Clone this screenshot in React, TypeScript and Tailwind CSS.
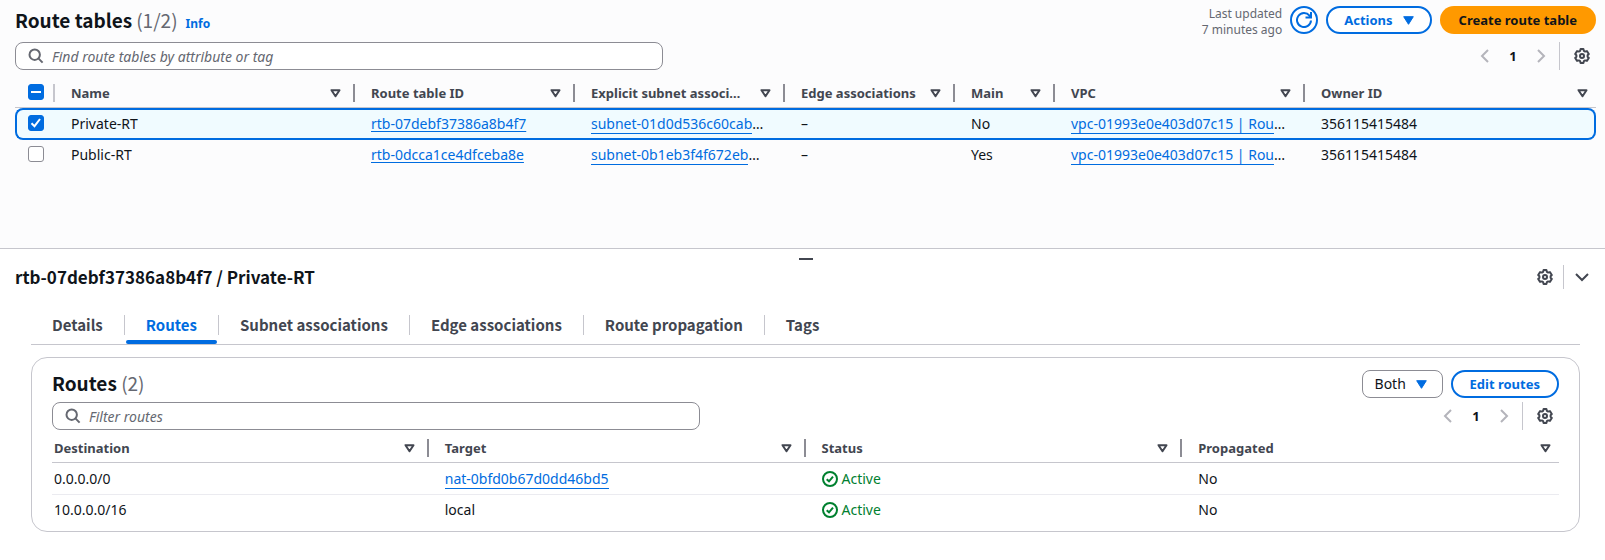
import React, { useEffect, useRef, useState } from "react";

const display = "font-['Noto_Sans_CJK_SC','Noto_Sans',sans-serif]";

function GearIcon() {
  return (
    <svg className="size-4" viewBox="0 0 16 16" fill="none" stroke="currentColor" strokeWidth="2" strokeLinejoin="round" aria-hidden="true">
      <path d="M6.6 1.1h2.8l.5 1.8 1.2.7 1.8-.5 1.9 2.9-1.2 1.3v1.4l1.2 1.3-1.9 2.9-1.8-.5-1.2.7-.5 1.8H6.6l-.5-1.8-1.2-.7-1.8.5L1.200 10l1.2-1.300V7.300L1.200 6l1.900-2.900 1.800.5 1.200-.7z" />
      <circle cx="8" cy="8" r="2" />
    </svg>
  );
}

function SearchIcon() {
  return (
    <svg className="size-4" viewBox="0 0 16 16" fill="none" stroke="currentColor" strokeWidth="2" aria-hidden="true">
      <circle cx="6.700" cy="6.700" r="5.200" />
      <path d="m10.400 10.400 4.200 4.200" />
    </svg>
  );
}

function FilterIcon() {
  return (
    <svg className="h-[9px] w-[11px]" viewBox="0 0 11 9" fill="none" stroke="currentColor" strokeWidth="2" strokeLinejoin="round" aria-hidden="true">
      <path d="M1.500 1.200h8L5.500 7.200z" />
    </svg>
  );
}

function Caret() {
  return (
    <svg className="h-[9px] w-[11px] text-[#006ce0]" viewBox="0 0 11 9" fill="currentColor" stroke="currentColor" strokeLinejoin="round" aria-hidden="true">
      <path d="M.7.7h9.600L5.500 8.300z" />
    </svg>
  );
}

function Chevron({ d }: { d: string }) {
  return (
    <svg className="size-4" viewBox="0 0 16 16" fill="none" stroke="currentColor" strokeWidth="2" aria-hidden="true">
      <path d={d} />
    </svg>
  );
}

function StatusActive() {
  return (
    <span className="flex items-center gap-1 text-[#00802f]">
      <svg className="size-4" viewBox="0 0 16 16" fill="none" stroke="currentColor" strokeWidth="2" aria-hidden="true">
        <circle cx="8" cy="8" r="7" />
        <path d="m4.700 8.200 2.300 2.100 4-4.600" />
      </svg>
      Active
    </span>
  );
}

function SearchBox({ label, placeholder }: { label: string; placeholder: string }) {
  return (
    <label className="flex h-7 w-full max-w-[648px] items-center gap-2 rounded-lg border border-[#8c8c94] bg-white px-3 text-[#656871]">
      <SearchIcon />
      <input
        type="search"
        aria-label={label}
        placeholder={placeholder}
        className="min-w-0 flex-1 bg-transparent pt-0.5 text-sm leading-5 text-[#0f141a] outline-none placeholder:text-[#656871] placeholder:italic"
      />
    </label>
  );
}

function Pager() {
  return (
    <div className="flex h-7 items-center">
      <nav aria-label="Pagination" className="flex items-center">
        <button type="button" aria-label="Previous page" className="flex w-7 justify-center text-[#b4b4bb]">
          <Chevron d="M11 2 5 8l6 6" />
        </button>
        <button type="button" aria-current="page" className="w-7 text-center text-[13px] leading-5 font-bold">
          1
        </button>
        <button type="button" aria-label="Next page" className="flex w-7 justify-center text-[#b4b4bb]">
          <Chevron d="m5 2 6 6-6 6" />
        </button>
      </nav>
      <span className="ml-1 h-7 w-px bg-[#c6c6cd]" />
      <button type="button" aria-label="Preferences" className="ml-3.5 mr-1.5 text-[#424650]">
        <GearIcon />
      </button>
    </div>
  );
}

function CheckBox({ label, initial, mixed = false }: { label: string; initial: boolean; mixed?: boolean }) {
  const [on, setOn] = useState(initial);
  const ref = useRef<HTMLInputElement>(null);
  useEffect(() => {
    if (ref.current) ref.current.indeterminate = mixed;
  }, [mixed]);
  return (
    <span className="grid size-4">
      <input
        ref={ref}
        type="checkbox"
        aria-label={label}
        checked={on}
        onChange={() => setOn(!on)}
        className="col-start-1 row-start-1 size-4 appearance-none rounded-[3px] border border-[#8c8c94] bg-white checked:border-[#006ce0] checked:bg-[#006ce0] indeterminate:border-[#006ce0] indeterminate:bg-[#006ce0]"
      />
      <svg className="pointer-events-none col-start-1 row-start-1 size-4" viewBox="0 0 16 16" fill="none" stroke="white" strokeWidth="2" aria-hidden="true">
        {mixed ? <path d="M3 8h10" /> : on ? <path d="m3.500 8.200 3 3 5.500-7.200" /> : null}
      </svg>
    </span>
  );
}

function HeadCell({ title, first = false, last = false }: { title: string; first?: boolean; last?: boolean }) {
  return (
    <th scope="col" className="border-b border-[#c6c6cd] p-0 text-left font-bold text-[#424650]">
      <div className={first ? "flex h-[18px] items-center pl-0.5" : "flex h-[18px] items-center pl-4"}>
        <span className="min-w-0 flex-1 whitespace-nowrap">{title}</span>
        <button type="button" aria-label={"Sort by " + title} className={last ? "ml-2 mr-2" : "ml-2 mr-3"}>
          <FilterIcon />
        </button>
        {!last && <span className="h-[18px] w-0.5 bg-[#8c8c94]" />}
      </div>
    </th>
  );
}

const tables = [
  { name: "Private-RT", id: "rtb-07debf37386a8b4f7", subnet: "subnet-01d0d536c60cab", main: "No", selected: true },
  { name: "Public-RT", id: "rtb-0dcca1ce4dfceba8e", subnet: "subnet-0b1eb3f4f672eb", main: "Yes", selected: false },
];

const routes = [
  { destination: "0.0.0.0/0", target: "nat-0bfd0b67d0dd46bd5", link: true },
  { destination: "10.0.0.0/16", target: "local", link: false },
];

const tabs = ["Details", "Routes", "Subnet associations", "Edge associations", "Route propagation", "Tags"];

const boxed = "border-b border-[#006ce0] text-[#006ce0]";

export default function App() {
  const [tab, setTab] = useState("Routes");
  return (
    <div className="flex min-h-screen flex-col bg-white font-['Noto_Sans',sans-serif] text-sm leading-5 text-[#0f141a]">
      <section className="flex h-[249px] flex-col border-b border-[#c6c6cd] bg-[#fcfcfd] pt-1.5 pr-[9px] pl-[15px]">
        <header className="flex h-7 items-center justify-between">
          <h1 className={display + " flex items-baseline text-[19px] leading-6 font-bold"}>
            Route tables
            <span className="ml-1 font-normal text-[#656871]">(1/2)</span>
            <a href="#info" className="ml-2 font-['Noto_Sans',sans-serif] text-xs font-bold text-[#006ce0]">
              Info
            </a>
          </h1>
          <div className="flex items-center gap-2">
            <p className="pt-1 text-right text-xs leading-4 text-[#656871]">
              Last updated
              <br />7 minutes ago
            </p>
            <button type="button" aria-label="Refresh" className="flex size-7 items-center justify-center rounded-full border-2 border-[#006ce0] bg-white text-[#006ce0]">
              <svg className="size-4" viewBox="0 0 16 16" fill="none" stroke="currentColor" strokeWidth="2" aria-hidden="true">
                <path d="M15 8.500A7 7 0 1 1 13.500 3.700L14.500 5M15 0v5.500H9.500" />
              </svg>
            </button>
            <button type="button" className="flex h-7 items-center gap-2.5 rounded-full border-2 border-[#006ce0] bg-white px-4 text-[13px] font-bold text-[#006ce0]">
              Actions
              <Caret />
            </button>
            <button type="button" className="h-7 rounded-full bg-[#ff9900] px-[19px] text-[13px] font-bold">
              Create route table
            </button>
          </div>
        </header>
        <div className="mt-2 flex items-center justify-between">
          <SearchBox label="Find route tables" placeholder="Find route tables by attribute or tag" />
          <Pager />
        </div>
        <table className="mt-[14px] w-full table-fixed border-separate border-spacing-0">
          <colgroup>
            <col className="w-10" />
            <col className="w-[300px]" />
            <col className="w-[220px]" />
            <col className="w-[210px]" />
            <col className="w-[170px]" />
            <col className="w-[100px]" />
            <col className="w-[250px]" />
            <col />
          </colgroup>
          <thead>
            <tr className="h-6 align-top text-[13px] leading-[18px]">
              <th scope="col" className="border-b border-[#c6c6cd] p-0">
                <div className="flex items-start justify-between pl-[13px]">
                  <CheckBox label="Select all route tables" initial={false} mixed />
                  <span className="h-[18px] w-0.5 bg-[#c6c6cd]" />
                </div>
              </th>
              <HeadCell title="Name" />
              <HeadCell title="Route table ID" />
              <HeadCell title="Explicit subnet associ…" />
              <HeadCell title="Edge associations" />
              <HeadCell title="Main" />
              <HeadCell title="VPC" />
              <HeadCell title="Owner ID" last />
            </tr>
          </thead>
          <tbody>
            {tables.map((row) => (
              <tr
                key={row.id}
                className={
                  row.selected
                    ? "h-8 [&>td]:border-y-2 [&>td]:border-[#006ce0] [&>td]:bg-[#f0fbff] [&>td:first-child]:rounded-l-lg [&>td:first-child]:border-l-2 [&>td:first-child]:pl-[11px] [&>td:last-child]:rounded-r-lg [&>td:last-child]:border-r-2"
                    : "h-[30px] [&>td:first-child]:pl-[13px]"
                }
              >
                <td className="py-0 pr-0 pb-0.5">
                  <CheckBox label={"Select " + row.name} initial={row.selected} />
                </td>
                <td className="py-0 pl-4">{row.name}</td>
                <td className="py-0 pl-4">
                  <a href={"#" + row.id} className="text-[#006ce0] underline underline-offset-2">{row.id}</a>
                </td>
                <td className="py-0 pl-4 whitespace-nowrap">
                  <a href="#subnet" className={boxed}>{row.subnet}</a>…
                </td>
                <td className="py-0 pl-4">–</td>
                <td className="py-0 pl-4">{row.main}</td>
                <td className="py-0 pl-4 whitespace-nowrap">
                  <a href="#vpc" className={boxed}>vpc-01993e0e403d07c15 | Rou</a>…
                </td>
                <td className="py-0 pl-4">356115415484</td>
              </tr>
            ))}
          </tbody>
        </table>
      </section>

      <section className="flex flex-col">
        <div className="flex h-4 items-center justify-center pt-1 pr-[9px] pl-[15px]">
          <button type="button" aria-label="Resize panel" className="h-0.5 w-3.5 bg-[#424650]" />
        </div>
        <header className="flex h-6 items-center justify-between pr-[15px] pl-[15px]">
          <h2 className={display + " text-[17px] leading-6 font-bold"}>rtb-07debf37386a8b4f7 / Private-RT</h2>
          <div className="flex items-center text-[#424650]">
            <button type="button" aria-label="Panel preferences">
              <GearIcon />
            </button>
            <span className="ml-2.5 h-6 w-px bg-[#c6c6cd]" />
            <button type="button" aria-label="Collapse panel" className="ml-2.5">
              <Chevron d="m2 5 6 6 6-6" />
            </button>
          </div>
        </header>

        <div className="pr-[25px] pl-[31px]">
          <div role="tablist" className="mt-[22px] flex h-[34px] border-b border-[#c6c6cd]">
            {tabs.map((name, i) => (
              <div key={name} className="flex items-start">
                {i > 0 && <span className="mt-1 h-5 w-px bg-[#c6c6cd]" />}
                <button
                  type="button"
                  role="tab"
                  aria-selected={name === tab}
                  onClick={() => setTab(name)}
                  className={
                    display +
                    " flex flex-col items-stretch text-[15px] leading-7 font-bold " +
                    (name === tab ? "text-[#006ce0]" : "text-[#424650]")
                  }
                >
                  <span className="px-[21px]">{name}</span>
                  {name === tab && <span className="mx-px mt-px h-1 rounded-sm bg-[#006ce0]" />}
                </button>
              </div>
            ))}
          </div>

          <div className="mt-3 rounded-2xl border border-[#c6c6cd] px-5 pt-3 pb-1.5">
            <div className="flex h-7 items-center justify-between">
              <h3 className={display + " pb-0.5 text-[19px] leading-6 font-bold"}>
                Routes <span className="font-normal text-[#656871]">(2)</span>
              </h3>
              <div className="flex items-center gap-2">
                <div className="grid items-center">
                  <select aria-label="Route type" className="col-start-1 row-start-1 h-7 w-[81px] appearance-none rounded-lg border border-[#8c8c94] bg-white pl-3 text-sm">
                    <option>Both</option>
                  </select>
                  <span className="pointer-events-none col-start-1 row-start-1 mr-4 justify-self-end">
                    <Caret />
                  </span>
                </div>
                <button type="button" className="h-7 rounded-full border-2 border-[#006ce0] bg-white px-[17px] text-[13px] font-bold text-[#006ce0]">
                  Edit routes
                </button>
              </div>
            </div>
            <div className="mt-1 flex items-center justify-between">
              <SearchBox label="Filter routes" placeholder="Filter routes" />
              <Pager />
            </div>
            <table className="mt-[9px] w-full table-fixed border-separate border-spacing-0">
              <thead>
                <tr className="h-6 align-top text-[13px] leading-[18px]">
                  <HeadCell title="Destination" first />
                  <HeadCell title="Target" />
                  <HeadCell title="Status" />
                  <HeadCell title="Propagated" last />
                </tr>
              </thead>
              <tbody>
                {routes.map((row) => (
                  <tr key={row.destination} className="h-8 last:h-[30px] [&:not(:last-child)>td]:border-b [&>td]:border-[#ebebf0]">
                    <td className="py-0 pl-0.5">{row.destination}</td>
                    <td className="py-0 pl-4">{row.link ? <a href="#nat" className={boxed}>{row.target}</a> : row.target}</td>
                    <td className="py-0 pl-4"><StatusActive /></td>
                    <td className="py-0 pl-4">No</td>
                  </tr>
                ))}
              </tbody>
            </table>
          </div>
        </div>
      </section>
    </div>
  );
}
